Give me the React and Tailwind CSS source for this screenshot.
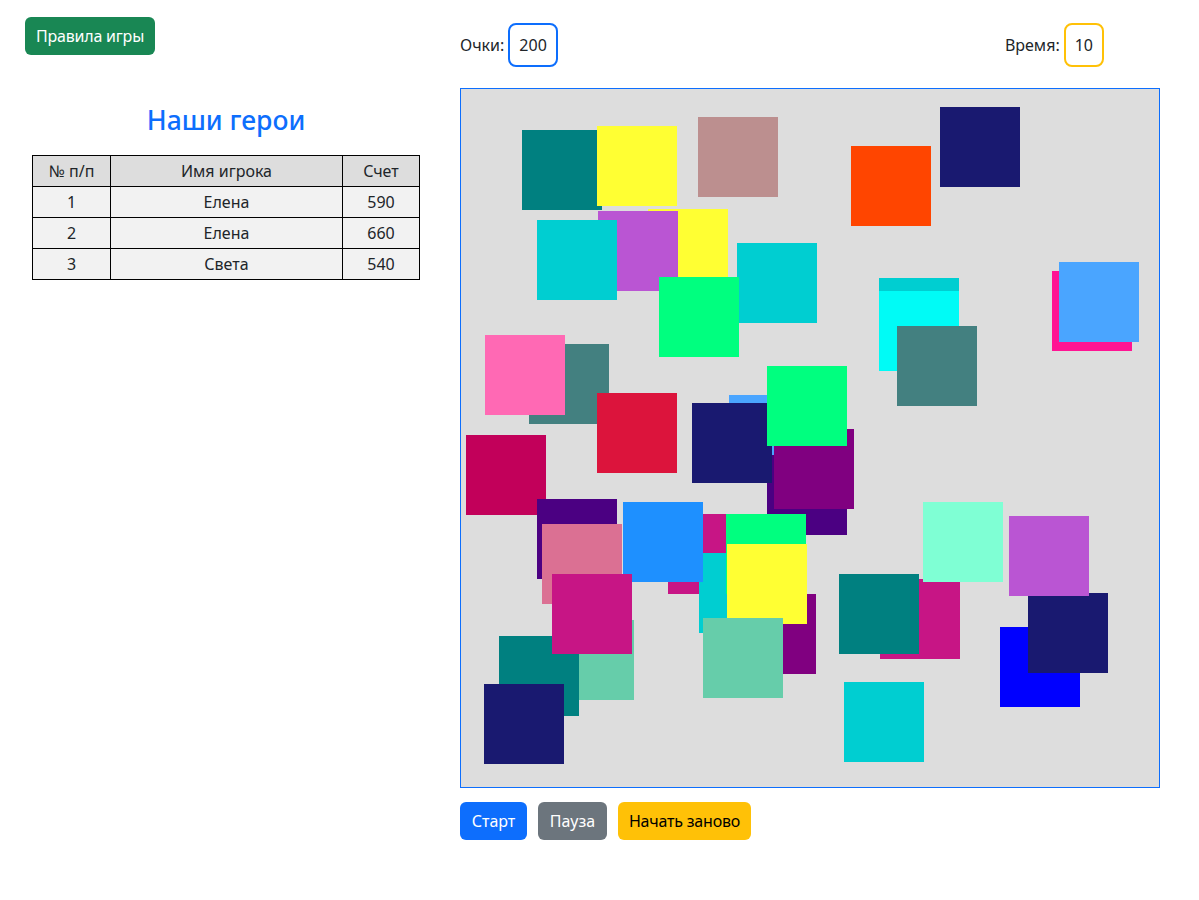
const squares = [
  ["left-[61px] top-[41px]", "bg-[#008080]"],
  ["left-[136px] top-[37px]", "bg-[#ffff33]"],
  ["left-[237px] top-[28px]", "bg-[#bc8f8f]"],
  ["left-[187px] top-[120px]", "bg-[#ffff33]"],
  ["left-[137px] top-[122px]", "bg-[#ba55d3]"],
  ["left-[76px] top-[131px]", "bg-[#00ced1]"],
  ["left-[276px] top-[154px]", "bg-[#00ced1]"],
  ["left-[198px] top-[188px]", "bg-[#00ff7f]"],
  ["left-[390px] top-[57px]", "bg-[#ff4500]"],
  ["left-[479px] top-[18px]", "bg-[#191970]"],
  ["left-[418px] top-[189px]", "bg-[#00ced1]"],
  ["left-[418px] top-[202px]", "bg-[#00fbf6]"],
  ["left-[436px] top-[237px]", "bg-[#438080]"],
  ["left-[591px] top-[182px]", "bg-[#ff1493]"],
  ["left-[598px] top-[173px]", "bg-[#4aa5ff]"],
  ["left-[68px] top-[255px]", "bg-[#438080]"],
  ["left-[24px] top-[246px]", "bg-[#ff69b4]"],
  ["left-[136px] top-[304px]", "bg-[#dc143c]"],
  ["left-[268px] top-[306px]", "bg-[#4aa5ff]"],
  ["left-[306px] top-[366px]", "bg-[#4b0082]"],
  ["left-[313px] top-[340px]", "bg-[#800080]"],
  ["left-[231px] top-[314px]", "bg-[#191970]"],
  ["left-[306px] top-[277px]", "bg-[#00ff7f]"],
  ["left-[5px] top-[346px]", "bg-[#c2005a]"],
  ["left-[76px] top-[410px]", "bg-[#4b0082]"],
  ["left-[81px] top-[435px]", "bg-[#db7093]"],
  ["left-[207px] top-[425px]", "bg-[#c71585]"],
  ["left-[238px] top-[464px]", "bg-[#00ced1]"],
  ["left-[162px] top-[413px]", "bg-[#1e90ff]"],
  ["left-[265px] top-[425px]", "bg-[#00ff7f]"],
  ["left-[275px] top-[505px]", "bg-[#800080]"],
  ["left-[266px] top-[455px]", "bg-[#ffff33]"],
  ["left-[242px] top-[529px]", "bg-[#66cdaa]"],
  ["left-[93px] top-[531px]", "bg-[#66cdaa]"],
  ["left-[38px] top-[547px]", "bg-[#008080]"],
  ["left-[91px] top-[485px]", "bg-[#c71585]"],
  ["left-[23px] top-[595px]", "bg-[#191970]"],
  ["left-[419px] top-[490px]", "bg-[#c71585]"],
  ["left-[462px] top-[413px]", "bg-[#7fffd4]"],
  ["left-[378px] top-[485px]", "bg-[#008080]"],
  ["left-[539px] top-[538px]", "bg-[#0000ff]"],
  ["left-[567px] top-[504px]", "bg-[#191970]"],
  ["left-[548px] top-[427px]", "bg-[#ba55d3]"],
  ["left-[383px] top-[593px]", "bg-[#00ced1]"],
];

const heroes = [
  { id: 1, name: "Елена", score: 590 },
  { id: 2, name: "Елена", score: 660 },
  { id: 3, name: "Света", score: 540 },
];

export default function App() {
  return (
    <div className="flex bg-white text-[#212529] text-base font-['Noto_Sans',sans-serif] min-h-[900px]">
      {/* Left side */}
      <div className="w-[460px] shrink-0">
        <button className="ml-[25px] mt-[17px] h-[38px] w-[130px] rounded-md bg-[#198754] text-white tracking-[-0.2px]">
          Правила игры
        </button>
        <h3 className="mt-[50px] text-center text-[26.5px] leading-[1.2] font-medium text-[#0d6efd] pr-[8px]">
          Наши герои
        </h3>
        <table className="ml-[32px] mt-[18px] w-[388px] border-collapse text-center">
          <thead className="bg-[#dddddd]">
            <tr>
              <th className="w-[78px] border border-black py-[3px] font-normal">№ п/п</th>
              <th className="border border-black py-[3px] font-normal">Имя игрока</th>
              <th className="w-[77px] border border-black py-[3px] font-normal">Счет</th>
            </tr>
          </thead>
          <tbody className="bg-[#f2f2f2]">
            {heroes.map((h) => (
              <tr key={h.id}>
                <td className="border border-black py-[3px]">{h.id}</td>
                <td className="border border-black py-[3px]">{h.name}</td>
                <td className="border border-black py-[3px]">{h.score}</td>
              </tr>
            ))}
          </tbody>
        </table>
      </div>

      {/* Game */}
      <div className="w-[700px] shrink-0">
        <div className="mt-[23px] flex items-center justify-between pr-[56px]">
          <div className="flex items-center gap-[4px]">
            <span>Очки:</span>
            <span className="border-2 border-[#0d6efd] rounded-lg px-[9px] py-2 leading-6">200</span>
          </div>
          <div className="flex items-center gap-[4px]">
            <span>Время:</span>
            <span className="border-2 border-[#ffc107] rounded-lg px-[9px] py-2 leading-6">10</span>
          </div>
        </div>
        <div className="relative mt-[21px] h-[700px] w-[700px] border border-[#0d6efd] bg-[#dddddd] overflow-hidden">
          {squares.map(([pos, color], i) => (
            <div key={i} className={`absolute w-[80px] h-[80px] ${pos} ${color}`} />
          ))}
        </div>
        <div className="mt-[14px] flex gap-[11px]">
          <button className="h-[38px] w-[67px] rounded-md bg-[#0d6efd] text-white">Старт</button>
          <button className="h-[38px] w-[69px] rounded-md bg-[#6c757d] text-white">Пауза</button>
          <button className="h-[38px] w-[133px] rounded-md bg-[#ffc107] text-black tracking-[-0.2px]">Начать заново</button>
        </div>
      </div>
    </div>
  );
}
